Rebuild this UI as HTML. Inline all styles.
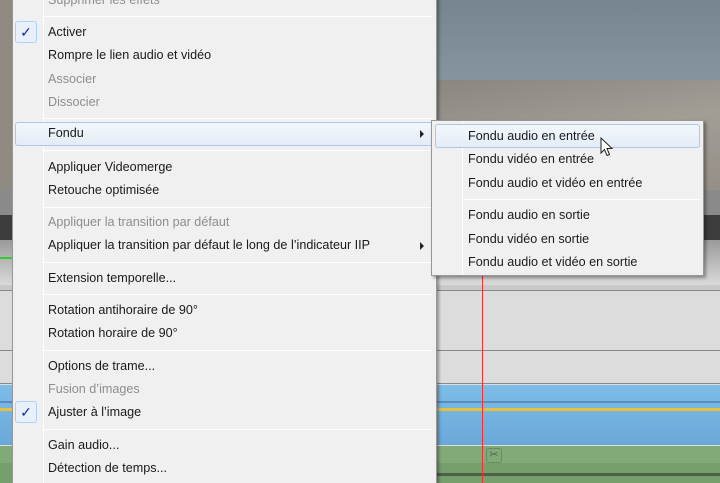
<!DOCTYPE html>
<html style="width:720px;height:483px;overflow:hidden"><head><meta charset="utf-8"><style>
*{margin:0;padding:0;box-sizing:border-box}
body{width:720px;height:483px;overflow:hidden;position:relative;background:#ddd;font-family:"Liberation Sans",sans-serif;font-size:12.6px;color:#1a1a1a}
.a{position:absolute}
.it{position:absolute;left:48px;height:20px;line-height:20px;white-space:nowrap}
.dis{color:#8d8d8d}
.sep{position:absolute;left:44px;right:4px;height:1px;background:#d7d7d7;border-bottom:1px solid #fff}
.arr{position:absolute;width:0;height:0;border-left:4px solid #222;border-top:4px solid transparent;border-bottom:4px solid transparent}
.chk{position:absolute;left:15px;width:22px;height:22px;border:1px solid #aecff7;border-radius:3px;background:#e8f0fb;color:#1a2d9a;text-align:center;line-height:20px;font-size:14px}
.hl{position:absolute;border:1px solid #a8c8ec;border-radius:3px;background:linear-gradient(#f3f7fc,#e3ecf7)}
</style></head><body>
<div class="a" style="left:0;top:0;width:720px;height:88px;background:linear-gradient(#76858f,#8796a0)"></div>
<div class="a" style="left:0;top:0;width:14px;height:190px;background:#8f8a82"></div>
<div class="a" style="left:436px;top:80px;width:284px;height:112px;background:linear-gradient(170deg,#8a8780,#a29d95 50%,#958f86)"></div>
<div class="a" style="left:0;top:190px;width:720px;height:25px;background:#8a8a8a"></div>
<div class="a" style="left:0;top:215px;width:720px;height:25px;background:#3c3c3c"></div>
<div class="a" style="left:0;top:240px;width:720px;height:45px;background:linear-gradient(#9a9a9a,#dadada)"></div>
<div class="a" style="left:0;top:257px;width:14px;height:2px;background:#3c3"></div>
<div class="a" style="left:0;top:285px;width:720px;height:6px;background:#c9c9c9;border-bottom:1px solid #888"></div>
<div class="a" style="left:0;top:291px;width:720px;height:60px;background:#dcdcdc;border-bottom:1px solid #888"></div>
<div class="a" style="left:0;top:352px;width:720px;height:32px;background:#dcdcdc;border-bottom:1px solid #888"></div>
<div class="a" style="left:0;top:385px;width:720px;height:60px;background:linear-gradient(#7dbde8,#6aa8d8)"></div>
<div class="a" style="left:0;top:401px;width:720px;height:2px;background:#5a8db8"></div>
<div class="a" style="left:0;top:408px;width:720px;height:3px;background:#e8c040"></div>
<div class="a" style="left:0;top:446px;width:720px;height:17px;background:#80aa78"></div>
<div class="a" style="left:0;top:463px;width:720px;height:20px;background:#75a06c"></div>
<div class="a" style="left:436px;top:473px;width:284px;height:3px;background:#333;opacity:.6"></div>
<div class="a" style="left:482px;top:272px;width:1px;height:211px;background:#e33"></div>
<div class="a" style="left:486px;top:448px;width:16px;height:15px;border:1px solid #6a8a66;border-radius:3px;color:#4a6a48;font-size:11px;text-align:center;line-height:13px">✂</div>
<div class="a" style="left:12px;top:-10px;width:425px;height:500px;background:#f0f0f0;border:1px solid #979797;box-shadow:2px 2px 3px rgba(0,0,0,.35)">
<div class="a" style="left:30px;top:0;width:1px;height:500px;background:#e2e3e3;border-right:1px solid #fff"></div>
</div>
<div class="it dis" style="top:-10px">Supprimer les effets</div>
<div class="sep" style="top:16px;left:44px;width:388px"></div>
<div class="chk" style="top:21px">✓</div>
<div class="it" style="top:22px">Activer</div>
<div class="it" style="top:45px">Rompre le lien audio et vidéo</div>
<div class="it dis" style="top:69px">Associer</div>
<div class="it dis" style="top:92px">Dissocier</div>
<div class="sep" style="top:118px;width:388px"></div>
<div class="hl" style="left:15px;top:122px;width:418px;height:24px"></div>
<div class="it" style="top:123px">Fondu</div>
<div class="arr" style="left:420px;top:130px"></div>
<div class="sep" style="top:150px;width:388px"></div>
<div class="it" style="top:157px">Appliquer Videomerge</div>
<div class="it" style="top:180px">Retouche optimisée</div>
<div class="sep" style="top:207px;width:388px"></div>
<div class="it dis" style="top:212px">Appliquer la transition par défaut</div>
<div class="it" style="top:235px">Appliquer la transition par défaut le long de l’indicateur IIP</div>
<div class="arr" style="left:420px;top:242px"></div>
<div class="sep" style="top:262px;width:388px"></div>
<div class="it" style="top:268px">Extension temporelle...</div>
<div class="sep" style="top:294px;width:388px"></div>
<div class="it" style="top:300px">Rotation antihoraire de 90°</div>
<div class="it" style="top:323px">Rotation horaire de 90°</div>
<div class="sep" style="top:350px;width:388px"></div>
<div class="it" style="top:356px">Options de trame...</div>
<div class="it dis" style="top:379px">Fusion d’images</div>
<div class="chk" style="top:401px">✓</div>
<div class="it" style="top:402px">Ajuster à l’image</div>
<div class="sep" style="top:429px;width:388px"></div>
<div class="it" style="top:435px">Gain audio...</div>
<div class="it" style="top:458px">Détection de temps...</div>
<div class="a" style="left:431px;top:120px;width:273px;height:156px;background:#f0f0f0;border:1px solid #979797;box-shadow:2px 2px 3px rgba(0,0,0,.35)">
<div class="a" style="left:30px;top:0;width:1px;height:154px;background:#e2e3e3;border-right:1px solid #fff"></div>
<div class="hl" style="left:3px;top:3px;width:265px;height:24px"></div>
<div class="it" style="left:36px;top:5px">Fondu audio en entrée</div>
<div class="it" style="left:36px;top:28px">Fondu vidéo en entrée</div>
<div class="it" style="left:36px;top:52px">Fondu audio et vidéo en entrée</div>
<div class="sep" style="left:32px;right:3px;top:78px"></div>
<div class="it" style="left:36px;top:84px">Fondu audio en sortie</div>
<div class="it" style="left:36px;top:108px">Fondu vidéo en sortie</div>
<div class="it" style="left:36px;top:131px">Fondu audio et vidéo en sortie</div>
</div>
<svg class="a" style="left:600px;top:137px" width="14" height="22" viewBox="0 0 14 22"><path d="M1 1 L1 16 L4.5 12.5 L7 18.5 L9.5 17.5 L7 11.5 L12 11.5 Z" fill="#fff" stroke="#222" stroke-width="1"/></svg>
</body></html>
